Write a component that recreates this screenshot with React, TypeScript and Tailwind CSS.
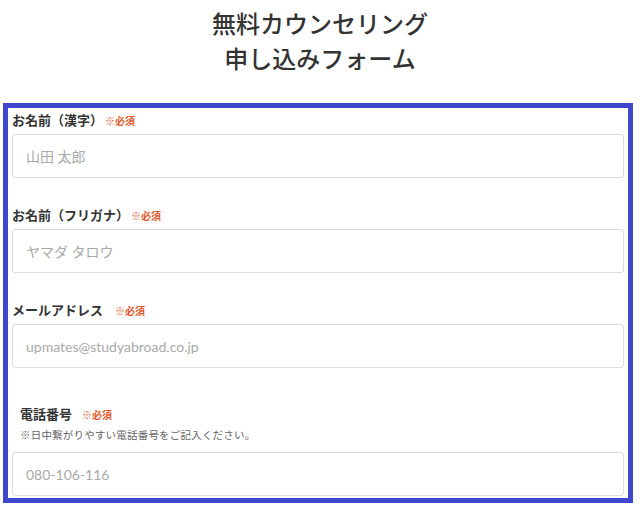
const jp = "font-['Noto_Sans_CJK_JP',sans-serif]";
const latin = "font-['Lato','Noto_Sans_CJK_JP',sans-serif]";

const Required: React.FC<{ className?: string }> = ({ className = '' }) => (
    <span className={`text-[10px] font-bold text-[#e2582c] ${className}`}>※必須</span>
);

const Field: React.FC<{ placeholder: string }> = ({ placeholder }) => (
    <input
        type="text"
        placeholder={placeholder}
        className={`block w-full h-[44px] px-[13px] border border-[#dcdcdc] rounded-[3px] bg-white text-[14px] text-[#333] placeholder:text-[#a9a9a9] outline-none ${latin}`}
    />
);

export default function App() {
    return (
        <div className={`w-[640px] h-[510px] bg-white ${jp} text-[#333]`}>
            <h1 className="pt-[5px] text-center text-[24px] leading-[35px] font-medium text-[#333]">
                無料カウンセリング
                <br />
                申し込みフォーム
            </h1>
            <form className="ml-[3px] mt-[28px] w-[630px] h-[400px] border-[5px] border-[#3f48cc] px-[4px] pt-[3px]">
                <div className="flex items-center gap-[2px] h-[18px] mb-[5px]">
                    <span className="text-[13px] font-bold text-[#333]">お名前（漢字）</span>
                    <Required />
                </div>
                <Field placeholder="山田 太郎" />

                <div className="flex items-center gap-[2px] h-[18px] mt-[28px] mb-[5px]">
                    <span className="text-[13px] font-bold text-[#333]">お名前（フリガナ）</span>
                    <Required />
                </div>
                <Field placeholder="ヤマダ タロウ" />

                <div className="flex items-center gap-[12px] h-[18px] mt-[28px] mb-[5px]">
                    <span className="text-[13px] font-bold text-[#333]">メールアドレス</span>
                    <Required />
                </div>
                <Field placeholder="upmates@studyabroad.co.jp" />

                <div className="pl-[8px] mt-[37px]">
                    <div className="flex items-center gap-[10px] h-[18px] mb-[5px]">
                        <span className="text-[13px] font-bold text-[#333]">電話番号</span>
                        <Required />
                    </div>
                    <p className="text-[10.5px] leading-[14px] tracking-[0.2px] text-[#666] mb-[10px]">
                        ※日中繋がりやすい電話番号をご記入ください。
                    </p>
                </div>
                <Field placeholder="080-106-116" />
            </form>
        </div>
    );
}
